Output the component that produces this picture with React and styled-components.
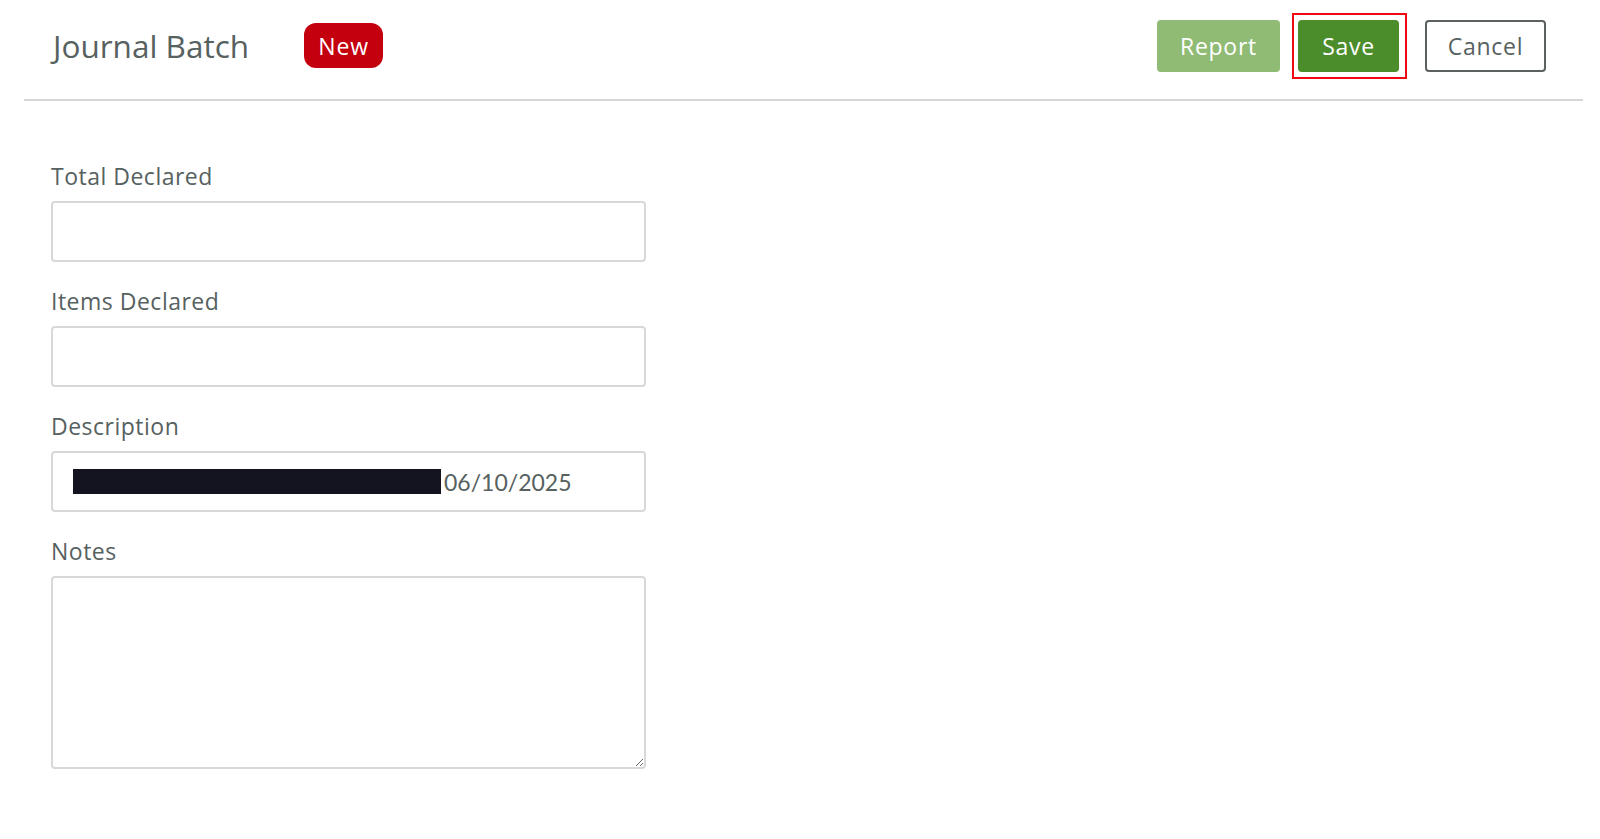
import React from 'react';
import styled, { createGlobalStyle } from 'styled-components';

const GlobalStyle = createGlobalStyle`
    html, body {
        margin: 0;
        padding: 0;
        background: #ffffff;
    }
    body {
        font-family: "Open Sans", Lato, sans-serif;
        color: #566160;
    }
`;

const Page = styled.div`
    padding: 0 17px 0 24px;
    min-height: 839px;
    box-sizing: border-box;
`;

const Header = styled.div`
    display: flex;
    align-items: flex-start;
    height: 101px;
    padding: 20px 37px 0 27px;
    box-sizing: border-box;
    border-bottom: 2px solid #d6d6d6;
`;

const Title = styled.h1`
    margin: 0 55px 0 2px;
    height: 52px;
    line-height: 52px;
    font-size: 31.5px;
    font-weight: 400;
    color: #566160;
`;

const Badge = styled.span`
    display: inline-flex;
    align-items: center;
    justify-content: center;
    width: 79px;
    height: 45px;
    margin-top: 3px;
    border-radius: 12px;
    background: #c4000e;
    color: #ffffff;
    font-size: 23px;
    letter-spacing: 0.8px;
`;

const Actions = styled.div`
    margin-left: auto;
    display: flex;
    align-items: center;
`;

const Button = styled.button`
    position: relative;
    height: 52px;
    width: ${props => props.width}px;
    margin-left: ${props => props.gap || 0}px;
    padding: 0;
    border-radius: 4px;
    font-family: "Open Sans", Lato, sans-serif;
    font-size: 23px;
    letter-spacing: 0.7px;
    cursor: pointer;
    box-sizing: border-box;
    border: ${props => (props.variant === 'outline' ? '2px solid #5b6160' : 'none')};
    background: ${props => ({ light: '#8fbb74', solid: '#4b8c2b', outline: '#ffffff' })[props.variant]};
    color: ${props => (props.variant === 'outline' ? '#566160' : '#ffffff')};
    outline: none;

    &::after {
        content: '';
        display: ${props => (props.focused ? 'block' : 'none')};
        position: absolute;
        top: -7px;
        bottom: -7px;
        left: -6px;
        right: -8px;
        border: 2px solid #ee0a10;
        pointer-events: none;
    }
`;

const Form = styled.div`
    padding: 61px 0 0 27px;
    width: 595px;
`;

const Field = styled.div`
    margin-bottom: 25px;
`;

const Label = styled.label`
    display: block;
    font-size: 23px;
    letter-spacing: 0.5px;
    line-height: 28px;
    margin-bottom: 11px;
    color: #566160;
`;

const Input = styled.input`
    display: block;
    width: 100%;
    height: 61px;
    box-sizing: border-box;
    border: 2px solid #d8d8d8;
    border-radius: 4px;
    padding: 0 20px;
    font-family: Lato, sans-serif;
    font-size: 22px;
    color: #566160;
`;

const FilledInput = styled.div`
    display: flex;
    align-items: center;
    width: 100%;
    height: 61px;
    box-sizing: border-box;
    border: 2px solid #d8d8d8;
    border-radius: 4px;
    padding: 0 20px;
    font-family: Lato, sans-serif;
    font-size: 23px;
    color: #566160;
`;

const Redacted = styled.span`
    display: inline-block;
    width: 368px;
    height: 25px;
    margin-right: 3px;
    background: #13141f;
`;

const TextArea = styled.textarea`
    display: block;
    width: 100%;
    height: 193px;
    box-sizing: border-box;
    border: 2px solid #d8d8d8;
    border-radius: 4px;
    padding: 12px 20px;
    font-family: Lato, sans-serif;
    font-size: 22px;
    color: #566160;
`;

export default function App() {
    return (
        <Page>
            <GlobalStyle />
            <Header>
                <Title>Journal Batch</Title>
                <Badge>New</Badge>
                <Actions>
                    <Button variant="light" width={123}>Report</Button>
                    <Button variant="solid" width={101} gap={18} focused>Save</Button>
                    <Button variant="outline" width={121} gap={26}>Cancel</Button>
                </Actions>
            </Header>
            <Form>
                <Field>
                    <Label>Total Declared</Label>
                    <Input type="text" />
                </Field>
                <Field>
                    <Label>Items Declared</Label>
                    <Input type="text" />
                </Field>
                <Field>
                    <Label>Description</Label>
                    <FilledInput>
                        <Redacted />
                        06/10/2025
                    </FilledInput>
                </Field>
                <Field>
                    <Label>Notes</Label>
                    <TextArea />
                </Field>
            </Form>
        </Page>
    );
}
